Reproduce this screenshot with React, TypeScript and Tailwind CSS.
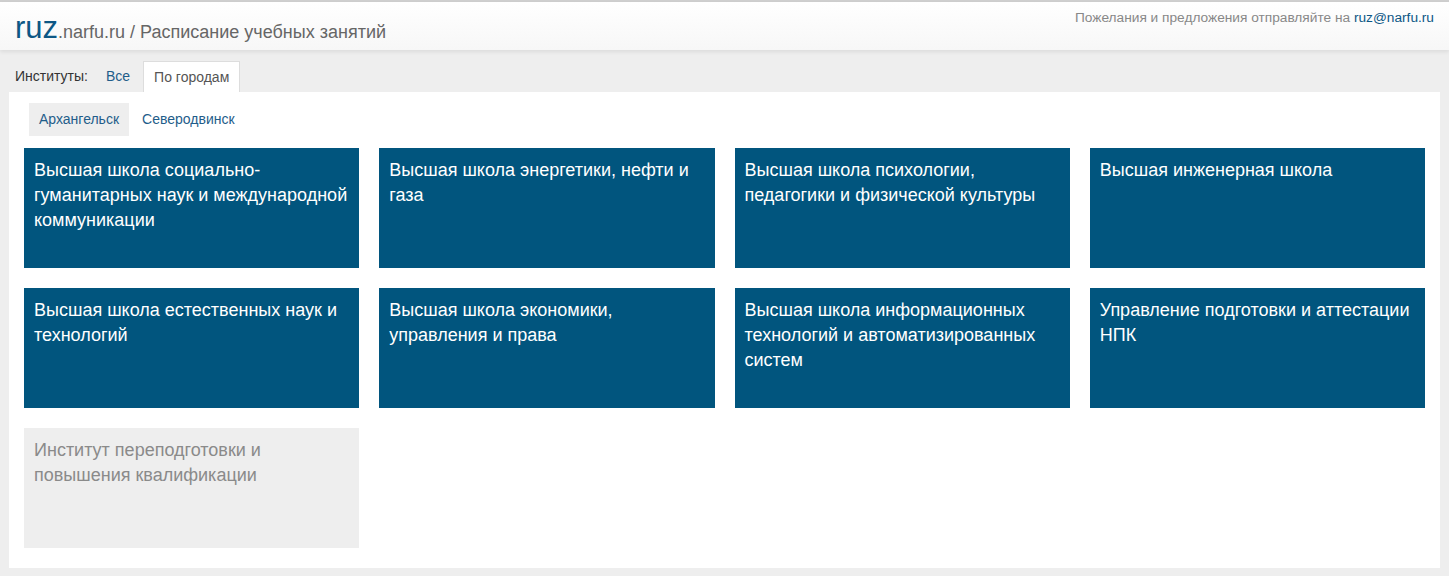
const institutes = [
	'Высшая школа социально-гуманитарных наук и международной коммуникации',
	'Высшая школа энергетики, нефти и газа',
	'Высшая школа психологии, педагогики и физической культуры',
	'Высшая инженерная школа',
	'Высшая школа естественных наук и технологий',
	'Высшая школа экономики, управления и права',
	'Высшая школа информационных технологий и автоматизированных систем',
	'Управление подготовки и аттестации НПК',
];

export default function App() {
	return (
		<div className="min-h-[576px] bg-[#eeeeee] font-['Liberation_Sans',Arial,sans-serif] border-t-2 border-[#cfcfcf]">
			<header className="h-[48px] bg-gradient-to-b from-white to-[#f7f7f7] shadow-[0_2px_4px_rgba(0,0,0,0.08)] flex items-start justify-between px-[15px]">
				<div className="pt-[10px] flex items-baseline">
					<span className="text-[31px] leading-[32px] text-[#0d5785]">ruz</span>
					<span className="text-[18px] text-[#666]">.narfu.ru / Расписание учебных занятий</span>
				</div>
				<div className="pt-[6px] text-[13.7px] text-[#888]">
					Пожелания и предложения отправляйте на <a className="text-[#0d5785]">ruz@narfu.ru</a>
				</div>
			</header>

			<div className="px-[9px] pt-[11px] pb-[9px]">
				<div className="flex items-center text-[14px] h-[31px]">
					<span className="pl-[6px] pr-[16px] text-[#333]">Институты:</span>
					<span className="px-[2px] text-[#1f5d8a]">Все</span>
					<span className="ml-[11px] h-[31px] px-[10px] flex items-center bg-white border border-b-0 border-[#dddddd] text-[#555]">По городам</span>
				</div>
				<div className="bg-white px-[15px] pt-[11px] pb-[20px]">
					<div className="flex gap-[12px] text-[14px] pl-[5px]">
						<span className="bg-[#eeeeee] px-[10px] py-[6px] text-[#1f5d8a]">Архангельск</span>
						<span className="px-[1px] py-[6px] text-[#1f5d8a]">Северодвинск</span>
					</div>
					<div className="grid grid-cols-4 gap-[20px] mt-[12px]">
						{institutes.map((name) => (
							<div key={name} className="h-[120px] bg-[#01557e] px-[10px] pt-[10px] text-[18px] leading-[25px] text-white">
								{name}
							</div>
						))}
						<div className="h-[120px] bg-[#eeeeee] px-[10px] pt-[10px] text-[18px] leading-[25px] text-[#8a8a8a]">
							Институт переподготовки и повышения квалификации
						</div>
					</div>
				</div>
			</div>
		</div>
	);
}
